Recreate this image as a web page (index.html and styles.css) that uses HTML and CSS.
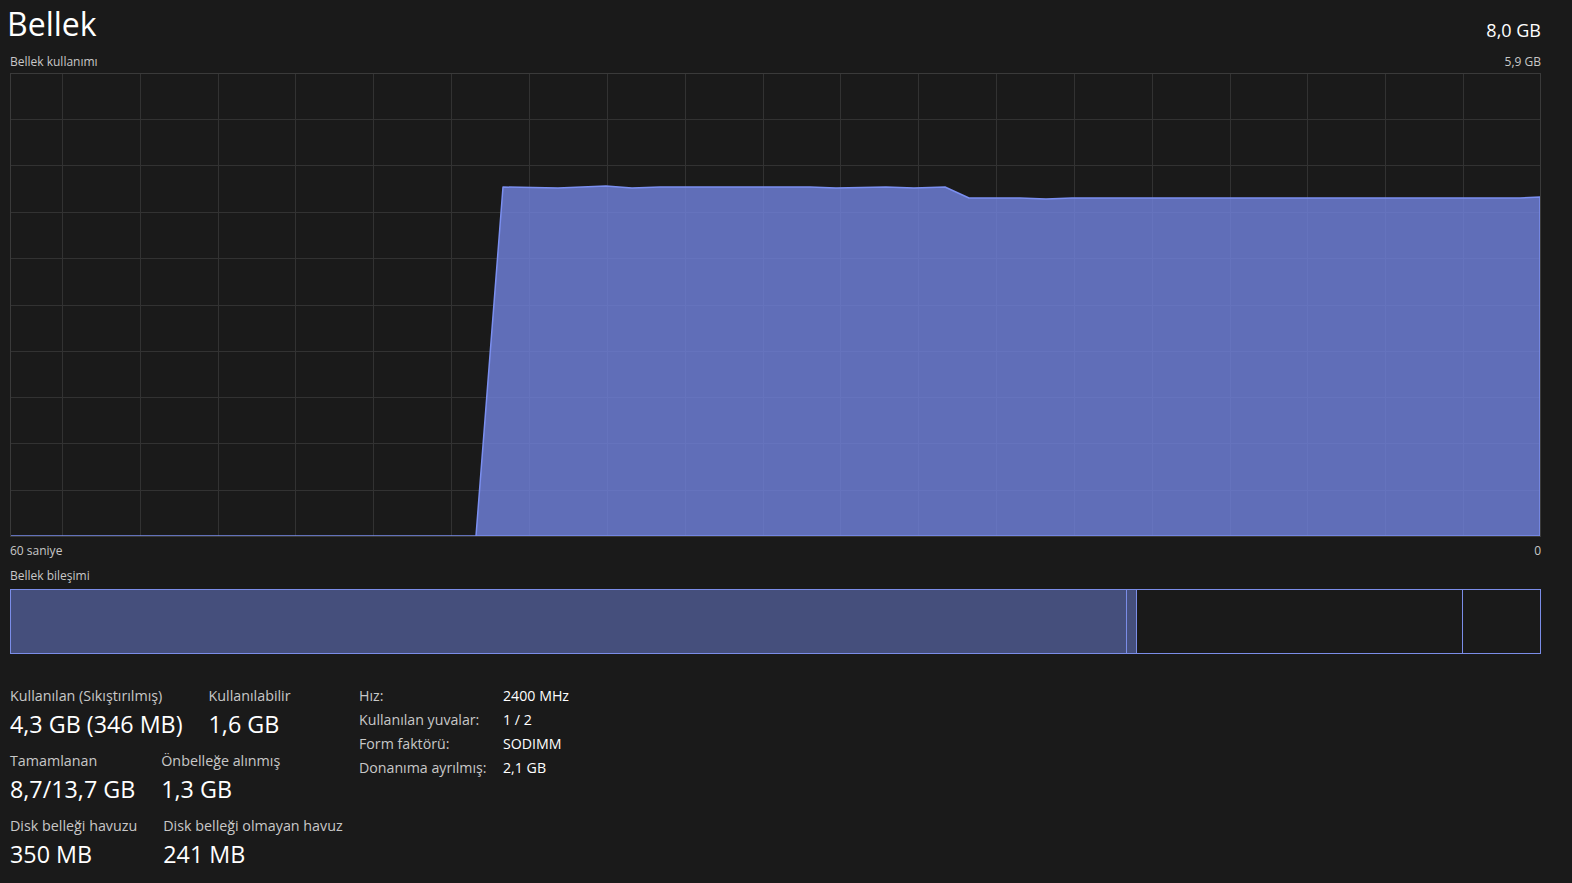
FILE: index.html
```html
<!DOCTYPE html>
<html lang="tr">
<head>
<meta charset="utf-8">
<title>Bellek</title>
<link rel="stylesheet" href="styles.css">
</head>
<body>
<main class="page">
  <header class="header">
    <h1 class="title">Bellek</h1>
    <div class="total">8,0 GB</div>
  </header>

  <div class="axis-row top-row">
    <span>Bellek kullanımı</span>
    <span>5,9 GB</span>
  </div>

  <div class="graph">
    <svg width="1531" height="464" viewBox="0 0 1531 464" xmlns="http://www.w3.org/2000/svg">
      <g class="grid" stroke="#323232" stroke-width="1" shape-rendering="crispEdges">
        <line x1="52.5" y1="0" x2="52.5" y2="464"/>
        <line x1="130.5" y1="0" x2="130.5" y2="464"/>
        <line x1="208.5" y1="0" x2="208.5" y2="464"/>
        <line x1="285.5" y1="0" x2="285.5" y2="464"/>
        <line x1="363.5" y1="0" x2="363.5" y2="464"/>
        <line x1="441.5" y1="0" x2="441.5" y2="464"/>
        <line x1="519.5" y1="0" x2="519.5" y2="464"/>
        <line x1="597.5" y1="0" x2="597.5" y2="464"/>
        <line x1="675.5" y1="0" x2="675.5" y2="464"/>
        <line x1="753.5" y1="0" x2="753.5" y2="464"/>
        <line x1="830.5" y1="0" x2="830.5" y2="464"/>
        <line x1="908.5" y1="0" x2="908.5" y2="464"/>
        <line x1="986.5" y1="0" x2="986.5" y2="464"/>
        <line x1="1064.5" y1="0" x2="1064.5" y2="464"/>
        <line x1="1142.5" y1="0" x2="1142.5" y2="464"/>
        <line x1="1220.5" y1="0" x2="1220.5" y2="464"/>
        <line x1="1297.5" y1="0" x2="1297.5" y2="464"/>
        <line x1="1375.5" y1="0" x2="1375.5" y2="464"/>
        <line x1="1453.5" y1="0" x2="1453.5" y2="464"/>
        <line x1="0" y1="46.5" x2="1531" y2="46.5"/>
        <line x1="0" y1="92.5" x2="1531" y2="92.5"/>
        <line x1="0" y1="139.5" x2="1531" y2="139.5"/>
        <line x1="0" y1="185.5" x2="1531" y2="185.5"/>
        <line x1="0" y1="232.5" x2="1531" y2="232.5"/>
        <line x1="0" y1="278.5" x2="1531" y2="278.5"/>
        <line x1="0" y1="324.5" x2="1531" y2="324.5"/>
        <line x1="0" y1="370.5" x2="1531" y2="370.5"/>
        <line x1="0" y1="417.5" x2="1531" y2="417.5"/>
      </g>
      <polygon class="area" points="0,463 466,463 493,114 548,115 596,113 622,115 650,114 800,114 826,115 876,114 904,115 935,114 959,125 1010,125 1036,126 1062,125 1510,125 1530,124 1530,463"/>
      <rect x="0.5" y="0.5" width="1530" height="463" fill="none" stroke="#3a3a3a" stroke-width="1" shape-rendering="crispEdges"/>
    </svg>
  </div>

  <div class="axis-row bottom-row">
    <span>60 saniye</span>
    <span>0</span>
  </div>

  <div class="section-label">Bellek bileşimi</div>

  <div class="composition">
    <div class="seg seg-used" style="width:1116px"></div>
    <div class="seg seg-modified" style="width:10px"></div>
    <div class="seg seg-standby" style="width:326px"></div>
    <div class="seg seg-free"></div>
  </div>

  <section class="details">
    <div class="stats">
      <div class="stat-row">
        <div class="stat">
          <div class="stat-label">Kullanılan (Sıkıştırılmış)</div>
          <div class="stat-value">4,3 GB (346 MB)</div>
        </div>
        <div class="stat">
          <div class="stat-label">Kullanılabilir</div>
          <div class="stat-value">1,6 GB</div>
        </div>
      </div>
      <div class="stat-row">
        <div class="stat">
          <div class="stat-label">Tamamlanan</div>
          <div class="stat-value">8,7/13,7 GB</div>
        </div>
        <div class="stat">
          <div class="stat-label">Önbelleğe alınmış</div>
          <div class="stat-value">1,3 GB</div>
        </div>
      </div>
      <div class="stat-row">
        <div class="stat">
          <div class="stat-label">Disk belleği havuzu</div>
          <div class="stat-value">350 MB</div>
        </div>
        <div class="stat">
          <div class="stat-label">Disk belleği olmayan havuz</div>
          <div class="stat-value">241 MB</div>
        </div>
      </div>
    </div>

    <dl class="props">
      <dt>Hız:</dt><dd>2400 MHz</dd>
      <dt>Kullanılan yuvalar:</dt><dd>1 / 2</dd>
      <dt>Form faktörü:</dt><dd>SODIMM</dd>
      <dt>Donanıma ayrılmış:</dt><dd>2,1 GB</dd>
    </dl>
  </section>
</main>
</body>
</html>
```

FILE: styles.css
```css
* { box-sizing: border-box; }

html, body {
  margin: 0;
  padding: 0;
  background: #1a1a1a;
}

body {
  font-family: "Open Sans", "Noto Sans", "Liberation Sans", sans-serif;
  color: #ffffff;
}

.page {
  width: 1572px;
  height: 883px;
  padding: 2px 31px 0 10px;
  overflow: hidden;
}

.header {
  display: flex;
  justify-content: space-between;
  align-items: flex-start;
  height: 44px;
}

.title {
  margin: 0 0 0 -3px;
  font-size: 32px;
  font-weight: 400;
  line-height: 44px;
  color: #ffffff;
}

.total {
  padding-top: 16px;
  font-size: 18px;
  line-height: 24px;
  color: #ffffff;
}

.axis-row {
  display: flex;
  justify-content: space-between;
  font-size: 12px;
  line-height: 16px;
  color: #c8c8c8;
}

.top-row {
  margin-top: 8px;
  margin-bottom: 3px;
}

.graph {
  height: 464px;
}

.graph svg {
  display: block;
}

.area {
  fill: rgba(114, 131, 224, 0.8);
  stroke: #7b8ff0;
  stroke-width: 1.5;
  stroke-linejoin: round;
}

.bottom-row {
  margin-top: 6px;
}

.section-label {
  margin-top: 9px;
  font-size: 12px;
  line-height: 16px;
  color: #c8c8c8;
}

.composition {
  display: flex;
  height: 65px;
  margin-top: 5px;
  border: 1px solid #7b8de8;
}

.seg {
  height: 100%;
  flex: none;
}

.seg-used {
  background: #454f7c;
  border-right: 1px solid #7b8de8;
}

.seg-modified {
  background: #454f7c;
  border-right: 1px solid #7b8de8;
}

.seg-standby {
  border-right: 1px solid #7b8de8;
}

.seg-free {
  flex: 1;
}

.details {
  display: flex;
  margin-top: 31px;
}

.stats {
  width: 349px;
  display: flex;
  flex-direction: column;
  gap: 9px;
}

.stat-row {
  display: flex;
  gap: 26px;
}

.stat-label {
  font-size: 14.3px;
  line-height: 22px;
  color: #c8c8c8;
  white-space: nowrap;
}

.stat-value {
  font-size: 23.3px;
  line-height: 34px;
  color: #ffffff;
  white-space: nowrap;
}

.props {
  display: grid;
  grid-template-columns: 144px auto;
  grid-auto-rows: 24px;
  margin: -1px 0 0 0;
  font-size: 14.2px;
  line-height: 24px;
}

.props dt {
  color: #c8c8c8;
  white-space: nowrap;
}

.props dd {
  margin: 0;
  color: #ffffff;
  white-space: nowrap;
}
```
